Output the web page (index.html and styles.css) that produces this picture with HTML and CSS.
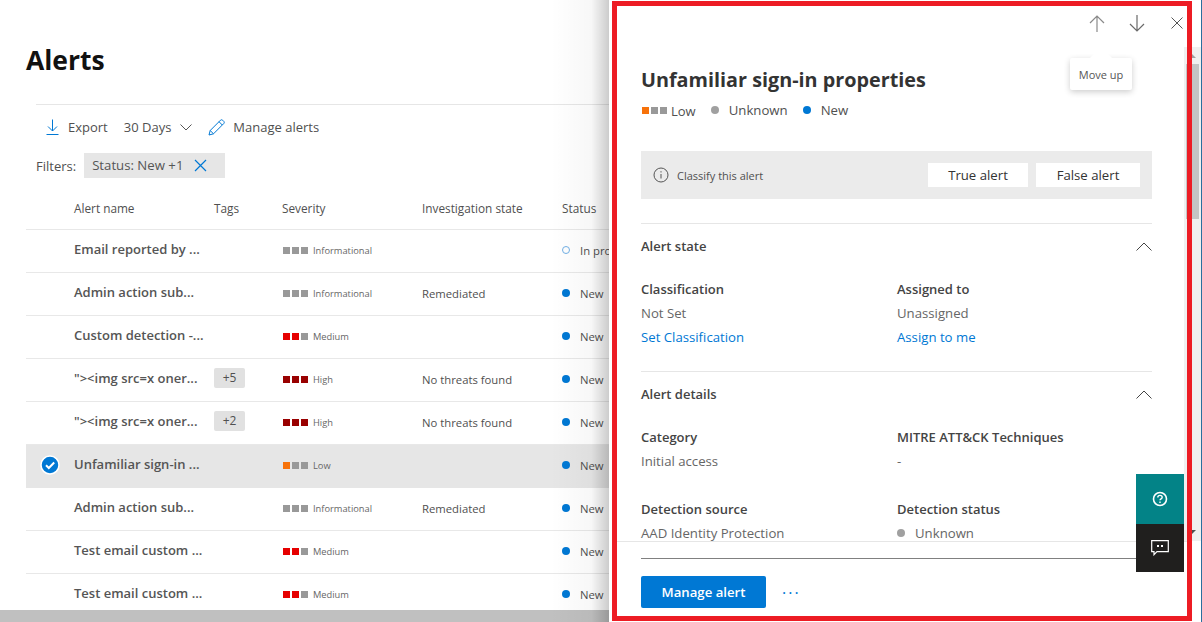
FILE: index.html
```html
<!DOCTYPE html>
<html lang="en">
<head>
    <meta charset="UTF-8">
    <meta name="viewport" content="width=device-width, initial-scale=1.0">
    <title>Alerts</title>
    <link rel="stylesheet" href="styles.css">
</head>
<body>

    <div class="main">
        <h1>Alerts</h1>

        <div class="toolbar">
            <span class="tool">
                <svg class="tool-icon" width="13" height="16" viewBox="0 0 13 16"><path d="M6.500 0.500V12M2 7.500L6.500 12 11 7.500M0.500 15.500h12" fill="none" stroke="#0078d4" stroke-width="1"/></svg>
                Export
            </span>
            <span class="tool days">
                30 Days
                <svg width="12" height="7" viewBox="0 0 12 7"><path d="M0.500 0.500L6 6l5.500-5.500" fill="none" stroke="#555" stroke-width="1"/></svg>
            </span>
            <span class="tool edit-tool">
                <svg width="17" height="17" viewBox="0 0 17 17"><path d="M1 16l1.200-4.500L12.500 1.200c.6-.6 1.500-.6 2.100 0l1.200 1.200c.6.6.6 1.500 0 2.100L5.500 14.800zM2.200 11.500l3.300 3.300M11 2.700l3.300 3.300" fill="none" stroke="#0078d4" stroke-width="1"/></svg>
                Manage alerts
            </span>
        </div>

        <div class="filters">
            <span>Filters:</span>
            <span class="chip">
                <span class="chip-text">Status: New +1</span>
                <svg width="13" height="13" viewBox="0 0 13 13"><path d="M1 1l11 11M12 1L1 12" fill="none" stroke="#0078d4" stroke-width="1.200"/></svg>
            </span>
        </div>

        <div class="row head">
            <span></span>
            <span>Alert name</span>
            <span>Tags</span>
            <span>Severity</span>
            <span>Investigation state</span>
            <span>Status</span>
        </div>

        <div class="row">
            <span></span>
            <span class="name">Email reported by ...</span>
            <span></span>
            <span class="sev"><i class="sq"></i><i class="sq"></i><i class="sq"></i><small>Informational</small></span>
            <span></span>
            <span class="status"><i class="dot hollow"></i>In progress</span>
        </div>
        <div class="row">
            <span></span>
            <span class="name">Admin action sub...</span>
            <span></span>
            <span class="sev"><i class="sq"></i><i class="sq"></i><i class="sq"></i><small>Informational</small></span>
            <span>Remediated</span>
            <span class="status"><i class="dot"></i>New</span>
        </div>
        <div class="row">
            <span></span>
            <span class="name">Custom detection -...</span>
            <span></span>
            <span class="sev"><i class="sq red"></i><i class="sq red"></i><i class="sq"></i><small>Medium</small></span>
            <span></span>
            <span class="status"><i class="dot"></i>New</span>
        </div>
        <div class="row">
            <span></span>
            <span class="name">"&gt;&lt;img src=x oner...</span>
            <span><b class="tag">+5</b></span>
            <span class="sev"><i class="sq dark"></i><i class="sq dark"></i><i class="sq dark"></i><small>High</small></span>
            <span>No threats found</span>
            <span class="status"><i class="dot"></i>New</span>
        </div>
        <div class="row">
            <span></span>
            <span class="name">"&gt;&lt;img src=x oner...</span>
            <span><b class="tag">+2</b></span>
            <span class="sev"><i class="sq dark"></i><i class="sq dark"></i><i class="sq dark"></i><small>High</small></span>
            <span>No threats found</span>
            <span class="status"><i class="dot"></i>New</span>
        </div>
        <div class="row selected">
            <span class="check">
                <svg width="20" height="20" viewBox="0 0 20 20"><circle cx="10" cy="10" r="9" fill="#0078d4" stroke="#fff" stroke-width="1.500"/><path d="M6 10.300l2.800 2.700L14.200 7.500" fill="none" stroke="#fff" stroke-width="2"/></svg>
            </span>
            <span class="name">Unfamiliar sign-in ...</span>
            <span></span>
            <span class="sev"><i class="sq orange"></i><i class="sq"></i><i class="sq"></i><small>Low</small></span>
            <span></span>
            <span class="status"><i class="dot"></i>New</span>
        </div>
        <div class="row">
            <span></span>
            <span class="name">Admin action sub...</span>
            <span></span>
            <span class="sev"><i class="sq"></i><i class="sq"></i><i class="sq"></i><small>Informational</small></span>
            <span>Remediated</span>
            <span class="status"><i class="dot"></i>New</span>
        </div>
        <div class="row">
            <span></span>
            <span class="name">Test email custom ...</span>
            <span></span>
            <span class="sev"><i class="sq red"></i><i class="sq red"></i><i class="sq"></i><small>Medium</small></span>
            <span></span>
            <span class="status"><i class="dot"></i>New</span>
        </div>
        <div class="row">
            <span></span>
            <span class="name">Test email custom ...</span>
            <span></span>
            <span class="sev"><i class="sq red"></i><i class="sq red"></i><i class="sq"></i><small>Medium</small></span>
            <span></span>
            <span class="status"><i class="dot"></i>New</span>
        </div>
    </div>

    <div class="hscroll"></div>
    <div class="shade"></div>

    <div class="panel">
        <div class="panel-nav">
            <svg width="16" height="17" viewBox="0 0 16 17"><path d="M8 17V1M1 8l7-7 7 7" fill="none" stroke="#8a8a8a" stroke-width="1.200"/></svg>
            <svg width="16" height="17" viewBox="0 0 16 17"><path d="M8 0v16M1 9l7 7 7-7" fill="none" stroke="#6a6a6a" stroke-width="1.200"/></svg>
            <svg class="close" width="12" height="12" viewBox="0 0 12 12"><path d="M0.500 0.500l11 11M11.500 0.500l-11 11" fill="none" stroke="#555" stroke-width="1"/></svg>
        </div>

        <div class="panel-body">
            <h2>Unfamiliar sign-in properties</h2>
            <div class="meta">
                <span class="sev"><i class="sq orange"></i><i class="sq"></i><i class="sq"></i><em>Low</em></span>
                <span class="status"><i class="dot gray"></i>Unknown</span>
                <span class="status"><i class="dot"></i>New</span>
            </div>

            <div class="classify">
                <svg width="16" height="16" viewBox="0 0 16 16"><circle cx="8" cy="8" r="7" fill="none" stroke="#555" stroke-width="1"/><path d="M8 7v4.500M8 4.200v1.300" fill="none" stroke="#555" stroke-width="1"/></svg>
                <span class="classify-text">Classify this alert</span>
                <button class="plain true-btn">True alert</button>
                <button class="plain">False alert</button>
            </div>

            <section class="block">
                <div class="block-head">
                    <span>Alert state</span>
                    <svg width="16" height="9" viewBox="0 0 16 9"><path d="M0.500 8.500L8 1l7.500 7.500" fill="none" stroke="#444" stroke-width="1"/></svg>
                </div>
                <div class="fields">
                    <div>
                        <h3>Classification</h3>
                        <p>Not Set</p>
                        <a>Set Classification</a>
                    </div>
                    <div>
                        <h3>Assigned to</h3>
                        <p>Unassigned</p>
                        <a>Assign to me</a>
                    </div>
                </div>
            </section>

            <section class="block">
                <div class="block-head">
                    <span>Alert details</span>
                    <svg width="16" height="9" viewBox="0 0 16 9"><path d="M0.500 8.500L8 1l7.500 7.500" fill="none" stroke="#444" stroke-width="1"/></svg>
                </div>
                <div class="fields">
                    <div>
                        <h3>Category</h3>
                        <p>Initial access</p>
                    </div>
                    <div>
                        <h3>MITRE ATT&amp;CK Techniques</h3>
                        <p>-</p>
                    </div>
                    <div>
                        <h3>Detection source</h3>
                        <p>AAD Identity Protection</p>
                    </div>
                    <div>
                        <h3>Detection status</h3>
                        <p class="status"><i class="dot gray"></i>Unknown</p>
                    </div>
                </div>
            </section>
        </div>

        <div class="panel-foot">
            <div class="foot-line"></div>
            <div class="foot-actions">
                <button class="primary">Manage alert</button>
                <span class="more">···</span>
            </div>
        </div>

        <div class="vscroll">
            <div class="arrow-up"></div>
            <div class="thumb"></div>
            <div class="arrow-down"></div>
        </div>

        <div class="float-btns">
            <div class="help">
                <svg width="16" height="16" viewBox="0 0 16 16"><circle cx="8" cy="8" r="6.500" fill="none" stroke="#fff" stroke-width="1.600"/><path d="M5.800 6.400C5.800 5 6.800 4.400 8 4.400s2.200.7 2.200 1.900c0 1.600-2.200 1.500-2.200 3M8 10.500v1.400" fill="none" stroke="#fff" stroke-width="1.400"/></svg>
            </div>
            <div class="chat">
                <svg width="18" height="16" viewBox="0 0 18 16"><path d="M0.700 0.700h16.600v11H6l-3 3v-3H0.700z" fill="none" stroke="#fff" stroke-width="1.200"/><path d="M6 5h2v2H6zM10 5h2v2h-2z" fill="#fff"/></svg>
            </div>
        </div>

        <div class="tip">Move up</div>
        <div class="frame"></div>
    </div>

</body>
</html>
```

FILE: styles.css
```css
html, body {
    height: 100%;
}

body {
    margin: 0;
    overflow: hidden;
    background: #fff;
    color: #505050;
    font-family: "Open Sans", "Noto Sans", Arial, sans-serif;
    font-size: 12px;
    position: relative;
}

/* left list */
.main {
    padding-left: 26px;
}

h1 {
    margin: 0;
    padding-top: 42px;
    height: 62px;
    color: #111;
    font-size: 26.500px;
    font-weight: 700;
    line-height: 36px;
}

.toolbar {
    margin-left: 10px;
    height: 44px;
    display: flex;
    align-items: center;
    gap: 16px;
    border-top: 1px solid #e6e6e6;
    padding-left: 10px;
    font-size: 13px;
}

.tool {
    display: flex;
    align-items: center;
    gap: 8px;
}

.tool-icon {
    margin-right: 1px;
}

.days {
    gap: 9px;
}

.edit-tool {
    gap: 8px;
}

.filters {
    margin-left: 10px;
    height: 25px;
    margin-top: 4px;
    display: flex;
    align-items: center;
    gap: 8px;
    font-size: 13px;
}

.chip {
    height: 25px;
    display: flex;
    align-items: center;
    gap: 11px;
    padding: 0 18px 0 8px;
    background: #e6e6e6;
    color: #555;
    font-size: 13.200px;
}

.chip-text {
    padding-bottom: 2px;
}

.row {
    height: 40px;
    padding-bottom: 2px;
    display: grid;
    grid-template-columns: 48px 140px 68px 140px 140px 200px;
    align-items: center;
    border-bottom: 1px solid #e8e8e8;
    width: 640px;
    font-size: 11.300px;
}

.row.head {
    height: 42px;
    padding-top: 9px;
    padding-bottom: 0;
    font-size: 11.800px;
}

.row.selected {
    background: #e6e6e6;
    border-bottom-color: #e6e6e6;
}

.name {
    font-size: 13px;
    font-weight: 600;
    color: #555;
    white-space: nowrap;
    padding-bottom: 2px;
}

.check {
    display: flex;
    padding-left: 14px;
}

.tag {
    display: inline-block;
    width: 31px;
    height: 20px;
    line-height: 20px;
    text-align: center;
    background: #e1e1e1;
    border-radius: 2px;
    font-weight: 400;
    font-size: 12px;
    margin-bottom: 2px;
}

.sev {
    display: flex;
    align-items: center;
    gap: 2px;
}

.row .sev {
    padding-left: 1px;
    padding-top: 1px;
}

.sev small {
    font-size: 9.300px;
    margin-left: 3px;
    color: #666;
}

.sev em {
    font-style: normal;
    font-size: 13px;
    margin-left: 2px;
    padding-top: 1px;
}

.sq {
    width: 7px;
    height: 7px;
    background: #999;
}

.sq.red {
    background: #e60000;
}

.sq.dark {
    background: #990000;
}

.sq.orange {
    background: #f7720a;
}

.status {
    display: flex;
    align-items: center;
    white-space: nowrap;
}

.dot {
    width: 8px;
    height: 8px;
    border-radius: 50%;
    background: #0078d4;
    margin-right: 10px;
}

.dot.hollow {
    background: #fff;
    border: 1px solid #71afe5;
    width: 6px;
    height: 6px;
}

.dot.gray {
    background: #a0a0a0;
}

.hscroll {
    position: absolute;
    left: 0;
    width: 609px;
    bottom: 0;
    height: 12px;
    background: #c0c0c0;
}

.shade {
    position: absolute;
    top: 0;
    bottom: 0;
    left: 550px;
    width: 59px;
    background: linear-gradient(to right, rgba(0, 0, 0, 0), rgba(0, 0, 0, 0.03) 70%, rgba(0, 0, 0, 0.2));
}

/* detail panel, sits over the list */
.panel {
    position: absolute;
    top: 0;
    left: 609px;
    width: 593px;
    height: 622px;
    box-sizing: border-box;
    padding: 6px 14px 6px 8px;
    background: #fff;
    border-right: 1px solid #2b6f9e;
    display: flex;
    flex-direction: column;
    font-size: 13.200px;
}

.frame {
    position: absolute;
    top: 1px;
    left: 3px;
    width: 580px;
    height: 620px;
    box-sizing: border-box;
    border: 5px solid #ed1c24;
    pointer-events: none;
}

.panel-nav {
    height: 34px;
    flex: none;
    display: flex;
    justify-content: flex-end;
    align-items: flex-start;
    padding-top: 9px;
    padding-right: 4px;
    gap: 24px;
    box-sizing: border-box;
}

.close {
    margin-top: 2px;
    margin-left: 2px;
}

.panel-body {
    flex: 1;
    overflow: hidden;
    padding-left: 24px;
    width: 511px;
}

h2 {
    margin: 0;
    padding-top: 26px;
    font-size: 19.800px;
    line-height: 28px;
    font-weight: 700;
    color: #333;
}

.meta {
    display: flex;
    gap: 15px;
    margin-top: 6px;
    height: 20px;
    align-items: center;
}

.meta .sev {
    gap: 2px;
    margin-left: 1px;
}

.classify {
    margin-top: 31px;
    height: 48px;
    background: #ebebeb;
    display: flex;
    align-items: center;
    padding: 0 12px;
    box-sizing: border-box;
    gap: 8px;
}

.classify-text {
    flex: 1;
    font-size: 11px;
}

.plain {
    width: 104px;
    height: 24px;
    border: 0;
    background: #fff;
    color: #333;
    font: inherit;
}

.true-btn {
    width: 100px;
}

.block {
    border-top: 1px solid #e6e6e6;
}

.classify + .block {
    margin-top: 24px;
}

.block-head {
    height: 44px;
    display: flex;
    justify-content: space-between;
    align-items: center;
    font-weight: 600;
    font-size: 13px;
    color: #444;
}

.fields {
    display: grid;
    grid-template-columns: 256px 1fr;
    row-gap: 24px;
    padding-top: 9px;
    padding-bottom: 22px;
}

h3 {
    margin: 0;
    height: 24px;
    line-height: 24px;
    font-size: 13px;
    font-weight: 600;
    color: #444;
}

.fields p {
    margin: 0;
    height: 24px;
    line-height: 24px;
    color: #666;
}

.fields a {
    display: block;
    height: 24px;
    line-height: 24px;
    color: #0078d4;
}

.panel-foot {
    flex: none;
    height: 74px;
    border-top: 1px solid #e6e6e6;
    padding-left: 24px;
}

.foot-line {
    width: 495px;
    margin-top: 16px;
    border-top: 1px solid #808080;
}

.foot-actions {
    display: flex;
    align-items: center;
    gap: 16px;
    margin-top: 17px;
}

.primary {
    width: 125px;
    height: 32px;
    border: 0;
    border-radius: 2px;
    background: #0078d4;
    color: #fff;
    font: inherit;
    font-weight: 600;
}

.more {
    color: #0078d4;
    font-size: 16px;
    letter-spacing: 2px;
    padding-top: 2px;
}

.vscroll {
    position: absolute;
    top: 47px;
    right: 0;
    height: 494px;
    width: 17px;
    background: #f0f0f0;
}

.thumb {
    position: absolute;
    top: 17px;
    left: 2px;
    width: 13px;
    height: 155px;
    background: #c4c4c4;
}

.arrow-up {
    position: absolute;
    top: 7px;
    left: 4px;
    border: 4px solid transparent;
    border-top: 0;
    border-bottom-color: #a0a0a0;
}

.arrow-down {
    position: absolute;
    bottom: 7px;
    left: 4px;
    border: 4px solid transparent;
    border-bottom: 0;
    border-top-color: #505050;
}

.float-btns {
    position: absolute;
    right: 17px;
    top: 474px;
    width: 48px;
}

.help, .chat {
    display: flex;
    align-items: center;
    justify-content: center;
}

.help {
    height: 50px;
    background: #038387;
}

.chat {
    height: 48px;
    background: #201f1e;
}

.tip {
    position: absolute;
    top: 58px;
    left: 461px;
    width: 62px;
    height: 32px;
    line-height: 33px;
    text-align: center;
    background: #fff;
    box-shadow: 0 2px 6px rgba(0, 0, 0, 0.2);
    border-radius: 2px;
    font-size: 11px;
    color: #555;
}

.tip::before {
    content: "";
    position: absolute;
    top: -11px;
    left: 20px;
    width: 22px;
    height: 11px;
    background: #fff;
    clip-path: polygon(50% 0, 100% 100%, 0 100%);
}
```
